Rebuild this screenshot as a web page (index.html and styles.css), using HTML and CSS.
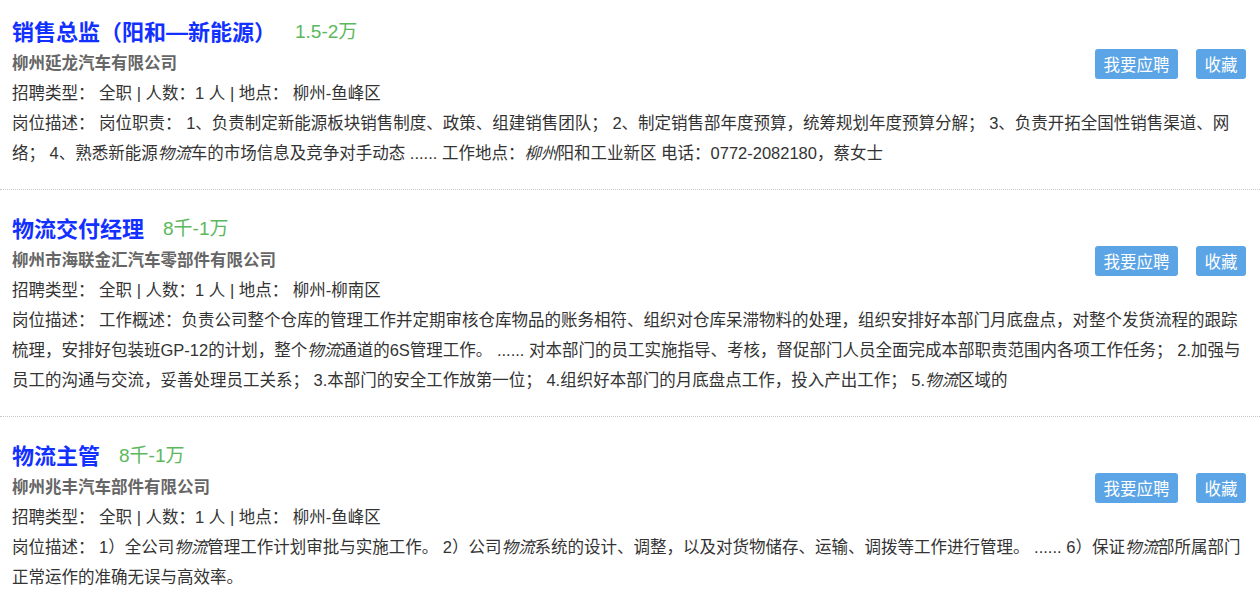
FILE: index.html
```html
<!DOCTYPE html>
<html lang="zh-CN">

<head>
  <meta charset="UTF-8">
  <meta name="viewport" content="width=device-width, initial-scale=1.0">
  <title>职位列表</title>
  <link rel="stylesheet" href="styles.css">
</head>

<body>
  <div class="job-list">
    <div class="job">
      <div class="job-head">
        <div class="job-main">
          <div class="job-title">
            <a href="#">销售总监（阳和—新能源）</a>
            <span class="salary">1.5-2万</span>
          </div>
          <div class="company">柳州延龙汽车有限公司</div>
          <div class="info">招聘类型：&nbsp;全职 | 人数：1 人 | 地点：&nbsp;柳州-鱼峰区</div>
        </div>
        <div class="actions">
          <button class="btn">我要应聘</button>
          <button class="btn">收藏</button>
        </div>
      </div>
      <div class="desc">岗位描述：&nbsp;岗位职责： 1、负责制定新能源板块销售制度、政策、组建销售团队； 2、制定销售部年度预算，统筹规划年度预算分解； 3、负责开拓全国性销售渠道、网络； 4、熟悉新能源<em>物流</em>车的市场信息及竞争对手动态 ...... 工作地点：<em>柳州</em>阳和工业新区 电话：0772-2082180，蔡女士</div>
    </div>

    <div class="job">
      <div class="job-head">
        <div class="job-main">
          <div class="job-title">
            <a href="#">物流交付经理</a>
            <span class="salary">8千-1万</span>
          </div>
          <div class="company">柳州市海联金汇汽车零部件有限公司</div>
          <div class="info">招聘类型：&nbsp;全职 | 人数：1 人 | 地点：&nbsp;柳州-柳南区</div>
        </div>
        <div class="actions">
          <button class="btn">我要应聘</button>
          <button class="btn">收藏</button>
        </div>
      </div>
      <div class="desc">岗位描述：&nbsp;工作概述：负责公司整个仓库的管理工作并定期审核仓库物品的账务相符、组织对仓库呆滞物料的处理，组织安排好本部门月底盘点，对整个发货流程的跟踪梳理，安排好包装班GP-12的计划，整个<em>物流</em>通道的6S管理工作。 ...... 对本部门的员工实施指导、考核，督促部门人员全面完成本部职责范围内各项工作任务； 2.加强与员工的沟通与交流，妥善处理员工关系； 3.本部门的安全工作放第一位； 4.组织好本部门的月底盘点工作，投入产出工作； 5.<em>物流</em>区域的</div>
    </div>

    <div class="job">
      <div class="job-head">
        <div class="job-main">
          <div class="job-title">
            <a href="#">物流主管</a>
            <span class="salary">8千-1万</span>
          </div>
          <div class="company">柳州兆丰汽车部件有限公司</div>
          <div class="info">招聘类型：&nbsp;全职 | 人数：1 人 | 地点：&nbsp;柳州-鱼峰区</div>
        </div>
        <div class="actions">
          <button class="btn">我要应聘</button>
          <button class="btn">收藏</button>
        </div>
      </div>
      <div class="desc">岗位描述：&nbsp;1）全公司<em>物流</em>管理工作计划审批与实施工作。 2）公司<em>物流</em>系统的设计、调整，以及对货物储存、运输、调拨等工作进行管理。 ...... 6）保证<em>物流</em>部所属部门正常运作的准确无误与高效率。</div>
    </div>
  </div>
</body>

</html>
```

FILE: styles.css
```css
* {
  margin: 0;
  padding: 0;
  box-sizing: border-box;
}

body {
  background: #fff;
  font-family: "Liberation Sans", "Noto Sans CJK SC", sans-serif;
  font-size: 16.5px;
  color: #333;
  overflow: hidden;
}

.job-list {
  margin-top: -7px;
}

.job {
  padding: 18px 14px 21px 12px;
  border-bottom: 1px dotted #c8c8c8;
}

.job-head {
  display: flex;
  justify-content: space-between;
  align-items: flex-start;
}

.job-title {
  display: flex;
  align-items: center;
  height: 37px;
}

.job-title a {
  color: #1230ff;
  font-size: 22px;
  font-weight: bold;
  text-decoration: none;
}

.salary {
  color: #5cb85c;
  font-size: 19px;
  margin-left: 19px;
}

.company {
  color: #666;
  font-weight: bold;
  line-height: 30px;
}

.info {
  line-height: 30px;
}

.actions {
  display: flex;
  gap: 18px;
  padding-top: 38px;
}

.btn {
  height: 30px;
  padding: 0 8.5px;
  border: none;
  border-radius: 3px;
  background: #5ba4e5;
  color: #fff;
  font-family: inherit;
  font-size: 16.5px;
  cursor: pointer;
}

.desc {
  line-height: 30px;
}

.desc em {
  font-style: italic;
}
```
